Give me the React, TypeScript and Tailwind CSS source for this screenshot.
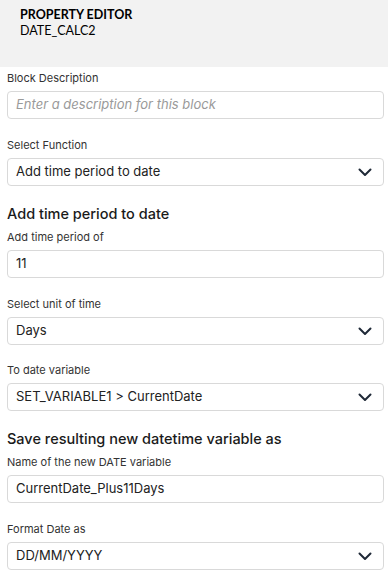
import React from 'react';

const Chevron = () => (
  <svg width="14" height="9" viewBox="0 0 14 9" fill="none" className="shrink-0">
    <path d="M1.5 1.5L7 7L12.5 1.5" stroke="#1f2937" strokeWidth="2" strokeLinecap="round" strokeLinejoin="round" />
  </svg>
);

const Label: React.FC<{ children: React.ReactNode }> = ({ children }) => (
  <div className="h-4 text-[11px] leading-4 text-[#333]">{children}</div>
);

const TextBox: React.FC<{ value?: string; placeholder?: string }> = ({ value, placeholder }) => (
  <div className="mt-[5px] h-[28px] w-[377px] rounded-[4px] border border-[#d9d9d9] bg-white px-2 flex items-center">
    {value ? (
      <span className="text-[13px] text-[#222]">{value}</span>
    ) : (
      <span className="text-[13px] italic text-[#9a9a9a]">{placeholder}</span>
    )}
  </div>
);

const SelectBox: React.FC<{ value: string }> = ({ value }) => (
  <div className="mt-[5px] h-[28px] w-[377px] rounded-[4px] border border-[#d9d9d9] bg-white pl-2 pr-[11px] flex items-center justify-between">
    <span className="text-[13px] text-[#222]">{value}</span>
    <Chevron />
  </div>
);

const Heading: React.FC<{ children: React.ReactNode }> = ({ children }) => (
  <div className="h-5 text-[14.5px] leading-5 font-medium text-[#1a1a1a]">{children}</div>
);

export default function App() {
  return (
    <div className="w-[388px] h-[571px] bg-white overflow-hidden" style={{ fontFamily: 'Inter, "Liberation Sans", sans-serif' }}>
      <div className="h-[67px] bg-[#f2f2f2] pl-5 pt-[7px]" style={{ fontFamily: 'Lato, "Liberation Sans", sans-serif' }}>
        <div className="text-[12.5px] leading-[16px] font-bold text-black">PROPERTY EDITOR</div>
        <div className="text-[12.5px] leading-[16px] text-black">DATE_CALC2</div>
      </div>

      <div className="pl-[7px] pt-[3px] flex flex-col">
        <Label>Block Description</Label>
        <TextBox placeholder="Enter a description for this block" />

        <div className="mt-[18px]">
          <Label>Select Function</Label>
          <SelectBox value="Add time period to date" />
        </div>

        <div className="mt-[18px]">
          <Heading>Add time period to date</Heading>
        </div>
        <div className="mt-[5px]">
          <Label>Add time period of</Label>
          <TextBox value="11" />
        </div>

        <div className="mt-[18px]">
          <Label>Select unit of time</Label>
          <SelectBox value="Days" />
        </div>

        <div className="mt-[17px]">
          <Label>To date variable</Label>
          <SelectBox value="SET_VARIABLE1 > CurrentDate" />
        </div>

        <div className="mt-[18px]">
          <Heading>Save resulting new datetime variable as</Heading>
        </div>
        <div className="mt-[5px]">
          <Label>Name of the new DATE variable</Label>
          <TextBox value="CurrentDate_Plus11Days" />
        </div>

        <div className="mt-[18px]">
          <Label>Format Date as</Label>
          <SelectBox value="DD/MM/YYYY" />
        </div>
      </div>
    </div>
  );
}
